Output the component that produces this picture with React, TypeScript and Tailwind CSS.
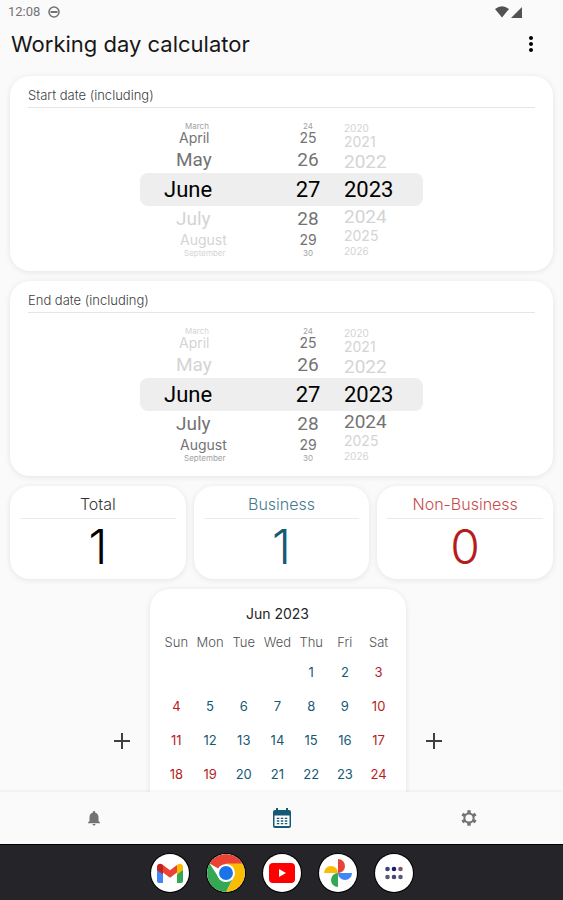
import React from 'react'
import { MdMoreVert, MdNotifications } from 'react-icons/md'

type WheelItem = { label: string; className: string }

const months = ['March', 'April', 'May', 'June', 'July', 'August', 'September']
const days = ['24', '25', '26', '27', '28', '29', '30']
const years = ['2020', '2021', '2022', '2023', '2024', '2025', '2026']

// The rows get lower and smaller towards both ends of the wheel
const monthRows = [
  'h-2 pl-[21px] text-[8px] leading-2 font-[Inter,sans-serif]',
  'h-4 pl-[15px] text-sm leading-4 font-[Inter,sans-serif]',
  'h-[27px] pl-3 text-[19px] leading-6',
  'h-[33px] text-[22px] leading-6',
  'h-[25px] pl-3 text-[19px] leading-6',
  'h-[18px] pl-4 text-sm leading-4 font-[Inter,sans-serif]',
  'h-2 pl-5 text-[8px] leading-2 font-[Inter,sans-serif]',
]
const dayRows = [
  'h-2 text-[8px] leading-2 font-[Inter,sans-serif]',
  'h-4 text-sm leading-4 font-[Inter,sans-serif]',
  'h-[27px] text-[19px] leading-6',
  'h-[33px] text-[22px] leading-6',
  'h-[25px] text-[19px] leading-6',
  'h-[18px] text-sm leading-4 font-[Inter,sans-serif]',
  'h-2 text-[8px] leading-2 font-[Inter,sans-serif]',
]
const yearRows = [
  'h-3 text-[10px] leading-3 font-[Inter,sans-serif]',
  'h-4 text-sm leading-4 font-[Inter,sans-serif]',
  'h-[23px] text-[19px] leading-[23px]',
  'h-[33px] text-[22px] leading-6',
  'h-[21px] text-[19px] leading-5',
  'h-[18px] text-sm leading-4 font-[Inter,sans-serif]',
  'h-3 text-[10px] leading-3 font-[Inter,sans-serif]',
]

const dark = ['text-neutral-400', 'text-neutral-500', 'text-neutral-500', 'text-black', 'text-neutral-500', 'text-neutral-500', 'text-neutral-400']
const pale = ['text-neutral-300', 'text-neutral-300', 'text-neutral-300', 'text-black', 'text-neutral-300', 'text-neutral-300', 'text-neutral-300']
const darkTop = [...dark.slice(0, 4), ...pale.slice(4)]
const darkBottom = [...pale.slice(0, 4), ...dark.slice(4)]
const yearBottom = [...pale.slice(0, 4), 'text-neutral-500', ...pale.slice(5)]

function toItems(labels: string[], rows: string[], colors: string[]): WheelItem[] {
  return labels.map((label, i) => ({ label, className: `${rows[i]} ${colors[i]}` }))
}

function Wheel({ name, items, className }: { name: string; items: WheelItem[]; className: string }) {
  return (
    <div role="listbox" aria-label={name} className={`flex flex-col ${className}`}>
      {items.map((item, i) => (
        <button
          key={item.label}
          type="button"
          role="option"
          aria-selected={i === 3}
          className={`flex shrink-0 items-center ${item.className}`}
        >
          {item.label}
        </button>
      ))}
    </div>
  )
}

function DateCard({ title, monthColors, yearColors }: { title: string; monthColors: string[]; yearColors: string[] }) {
  return (
    <section className="rounded-[20px] bg-white px-[18px] pt-3 pb-4 shadow-[0_1px_6px_rgba(0,0,0,0.09)]">
      <h2 className="border-b border-neutral-200 pb-1 text-[13px] leading-[15px] font-light text-neutral-700">{title}</h2>
      <div className="mt-3.5 flex justify-center">
        <div className="relative flex h-[133px] w-[283px] pl-6 font-[Roboto,sans-serif]">
          <div className="absolute inset-x-0 top-[51px] h-[33px] rounded-lg bg-[#eeeeee]" />
          <Wheel name="Month" items={toItems(months, monthRows, monthColors)} className="relative w-[116px]" />
          <Wheel name="Day" items={toItems(days, dayRows, dark)} className="relative w-14 items-center" />
          <Wheel name="Year" items={toItems(years, yearRows, yearColors)} className="relative ml-2" />
        </div>
      </div>
    </section>
  )
}

function StatCard({ label, value, className }: { label: string; value: number; className: string }) {
  return (
    <section className={`flex-1 rounded-[20px] bg-white px-2.5 pt-2 pb-1 text-center shadow-[0_1px_6px_rgba(0,0,0,0.09)] ${className}`}>
      <h2 className="border-b border-neutral-200 pb-1 text-base leading-5 font-light opacity-80">{label}</h2>
      <p className="text-5xl leading-[56px] font-light">{value}</p>
    </section>
  )
}

const weekDays = ['Sun', 'Mon', 'Tue', 'Wed', 'Thu', 'Fri', 'Sat']
const holidays = [19]
const weeks = Array.from({ length: 6 }, (_, w) =>
  Array.from({ length: 7 }, (_, d) => {
    const day = w * 7 + d - 3
    return day > 0 && day <= 30 ? day : null
  })
)

function Calendar() {
  return (
    <div className="w-64 rounded-[20px] bg-white px-2.5 pt-2.5 pb-8 shadow-[0_1px_6px_rgba(0,0,0,0.09)]">
      <table className="w-full table-fixed text-center">
        <caption className="h-[31px] text-sm leading-[30px] text-neutral-800">Jun 2023</caption>
        <thead>
          <tr className="h-[26px] text-[13px] text-neutral-600">
            {weekDays.map((day) => (
              <th key={day} scope="col" className="p-0 font-light">
                {day}
              </th>
            ))}
          </tr>
        </thead>
        <tbody>
          {weeks.map((week, w) => (
            <tr key={w} className="h-[34px] text-[13px]">
              {week.map((day, d) => (
                <td
                  key={d}
                  className={`p-0 ${d === 0 || d === 6 || holidays.includes(day ?? 0) ? 'text-[#b71c1c]' : 'text-[#155a75]'}`}
                >
                  {day}
                </td>
              ))}
            </tr>
          ))}
        </tbody>
      </table>
    </div>
  )
}

function PlusButton({ label }: { label: string }) {
  return (
    <button type="button" aria-label={label} className="flex size-8 items-center justify-center text-neutral-700">
      <svg viewBox="0 0 18 18" className="size-[18px]" stroke="currentColor" strokeWidth="2">
        <path d="M9 1v16M1 9h16" />
      </svg>
    </button>
  )
}

function CalendarIcon() {
  return (
    <svg viewBox="0 0 18 20" className="h-5 w-[18px]">
      <path fill="#155a75" d="M3 0h2v2h8V0h2v2h1a2 2 0 0 1 2 2v14a2 2 0 0 1-2 2H2a2 2 0 0 1-2-2V4a2 2 0 0 1 2-2h1z" />
      <path fill="#fff" d="M1.500 7.500h15V18h-15z" />
      <path stroke="#155a75" strokeWidth="1.300" strokeDasharray="2.500 1.500" d="M3.800 10.300h11M3.800 13h11M3.800 15.700h11" />
    </svg>
  )
}

function GearIcon() {
  return (
    <svg viewBox="0 0 16 16" className="size-4" fill="none" stroke="currentColor">
      <circle cx="8" cy="8" r="4.600" strokeWidth="2" />
      <path strokeWidth="3.400" d="M8 .3v3M8 12.700v3M1.300 4.150l2.600 1.500M12.100 10.350l2.600 1.500M1.300 11.850l2.600-1.500M12.100 5.650l2.600-1.500" />
    </svg>
  )
}

function GmailIcon() {
  return (
    <svg viewBox="0 0 26 20" className="h-5 w-[26px]">
      <path fill="#4285f4" d="M0 4l6 4v12H2a2 2 0 0 1-2-2z" />
      <path fill="#34a853" d="M20 8l6-4v14a2 2 0 0 1-2 2h-4z" />
      <path fill="#fbbc04" d="M20 2c2.500-2.200 6-1 6 2v3l-6 4.500z" />
      <path fill="#ea4335" d="M6 2l7 5.300L20 2v7.500l-7 5.200-7-5.200z" />
      <path fill="#c5221f" d="M0 4c0-3 3.500-4.200 6-2v9.500L0 7z" />
    </svg>
  )
}

function ChromeIcon() {
  return (
    <svg viewBox="0 0 40 40" className="size-[38px]">
      <path fill="#ea4335" d="M20 20L2.700 10A20 20 0 0 1 37.300 10z" />
      <path fill="#fbbc04" d="M20 10h17.300A20 20 0 0 1 20 40l8-15.500z" />
      <path fill="#34a853" d="M2.700 10l9.600 14.800A9 9 0 0 0 23 28.500L20 40A20 20 0 0 1 2.700 10z" />
      <path fill="#34a853" d="M20 40l7.800-15.500L20 20z" />
      <circle cx="20" cy="20" r="9.500" fill="#fff" />
      <circle cx="20" cy="20" r="7.300" fill="#1a73e8" />
    </svg>
  )
}

function YoutubeIcon() {
  return (
    <svg viewBox="0 0 26 20" className="h-5 w-[26px]">
      <rect width="26" height="20" rx="4" fill="#f00" />
      <path fill="#fff" d="M10 6l7 4-7 4z" />
    </svg>
  )
}

function PhotosIcon() {
  return (
    <svg viewBox="0 0 28 28" className="size-7">
      <path fill="#ea4335" d="M14 0a7 7 0 0 1 0 14z" />
      <path fill="#4285f4" d="M28 14a7 7 0 0 1-14 0z" />
      <path fill="#34a853" d="M14 28a7 7 0 0 1 0-14z" />
      <path fill="#fbbc04" d="M0 14a7 7 0 0 1 14 0z" />
    </svg>
  )
}

function AppsIcon() {
  return (
    <svg viewBox="0 0 18 14" className="h-3.5 w-[18px]">
      <circle cx="2.500" cy="3" r="2.300" fill="#3d4380" />
      <circle cx="9" cy="3" r="2.300" fill="#1c1c78" />
      <circle cx="15.500" cy="3" r="2.300" fill="#8a5568" />
      <circle cx="2.500" cy="11" r="2.300" fill="#5c5878" />
      <circle cx="9" cy="11" r="2.300" fill="#4a4470" />
      <circle cx="15.500" cy="11" r="2.300" fill="#5c5878" />
    </svg>
  )
}

const dockApps = [
  { name: 'Gmail', icon: <GmailIcon /> },
  { name: 'Chrome', icon: <ChromeIcon /> },
  { name: 'YouTube', icon: <YoutubeIcon /> },
  { name: 'Photos', icon: <PhotosIcon /> },
  { name: 'All apps', icon: <AppsIcon /> },
]

export default function App() {
  return (
    <div className="flex h-screen flex-col bg-[#fafafa] font-[Inter,sans-serif] text-black">
      <div className="flex h-6 shrink-0 items-center pr-10 pl-2 text-neutral-500">
        <span className="font-[Roboto,sans-serif] text-[13px]">12:08</span>
        <svg viewBox="0 0 12 12" className="ml-2 size-3" fill="none" stroke="currentColor" strokeWidth="1.500">
          <circle cx="6" cy="6" r="5" />
          <path d="M2.500 6h7" strokeWidth="2" />
        </svg>
        <svg viewBox="0 0 28 12" className="ml-auto h-3 w-7 text-neutral-600" fill="currentColor">
          <path d="M0 3Q7-2.600 14 3L7 11.500z" />
          <path d="M27 1v11H16z" />
        </svg>
      </div>
      <header className="flex h-10 shrink-0 items-center justify-between pr-5 pl-[11px]">
        <h1 className="text-[22px] leading-7 text-neutral-900">Working day calculator</h1>
        <button type="button" aria-label="More options">
          <MdMoreVert className="size-6" />
        </button>
      </header>

      <main className="flex min-h-0 flex-1 flex-col gap-2.5 overflow-y-auto px-2.5 pt-3 [scrollbar-width:none]">
        <DateCard title="Start date (including)" monthColors={darkTop} yearColors={pale} />
        <DateCard title="End date (including)" monthColors={darkBottom} yearColors={yearBottom} />
        <div className="flex gap-2">
          <StatCard label="Total" value={1} className="text-black" />
          <StatCard label="Business" value={1} className="text-[#155a75]" />
          <StatCard label="Non-Business" value={0} className="text-[#b71c1c]" />
        </div>
        <div className="flex items-center justify-center gap-3 pr-2">
          <PlusButton label="Add month before" />
          <Calendar />
          <PlusButton label="Add month after" />
        </div>
      </main>

      <nav className="relative flex h-[52px] shrink-0 items-center bg-[#fafafa] text-neutral-500 shadow-[0_-1px_3px_rgba(0,0,0,0.06)]">
        <a href="#reminders" aria-label="Reminders" className="flex flex-1 justify-center">
          <MdNotifications className="size-[18px]" />
        </a>
        <a href="#calculator" aria-label="Calculator" className="flex flex-1 justify-center">
          <CalendarIcon />
        </a>
        <a href="#settings" aria-label="Settings" className="flex flex-1 justify-center">
          <GearIcon />
        </a>
      </nav>

      <footer className="flex h-14 shrink-0 items-center justify-center gap-[18px] border-t border-black bg-[#252529]">
        {dockApps.map((app) => (
          <button
            key={app.name}
            type="button"
            aria-label={app.name}
            className="flex size-[38px] items-center justify-center overflow-hidden rounded-full bg-white ring-1 ring-black"
          >
            {app.icon}
          </button>
        ))}
      </footer>
    </div>
  )
}
